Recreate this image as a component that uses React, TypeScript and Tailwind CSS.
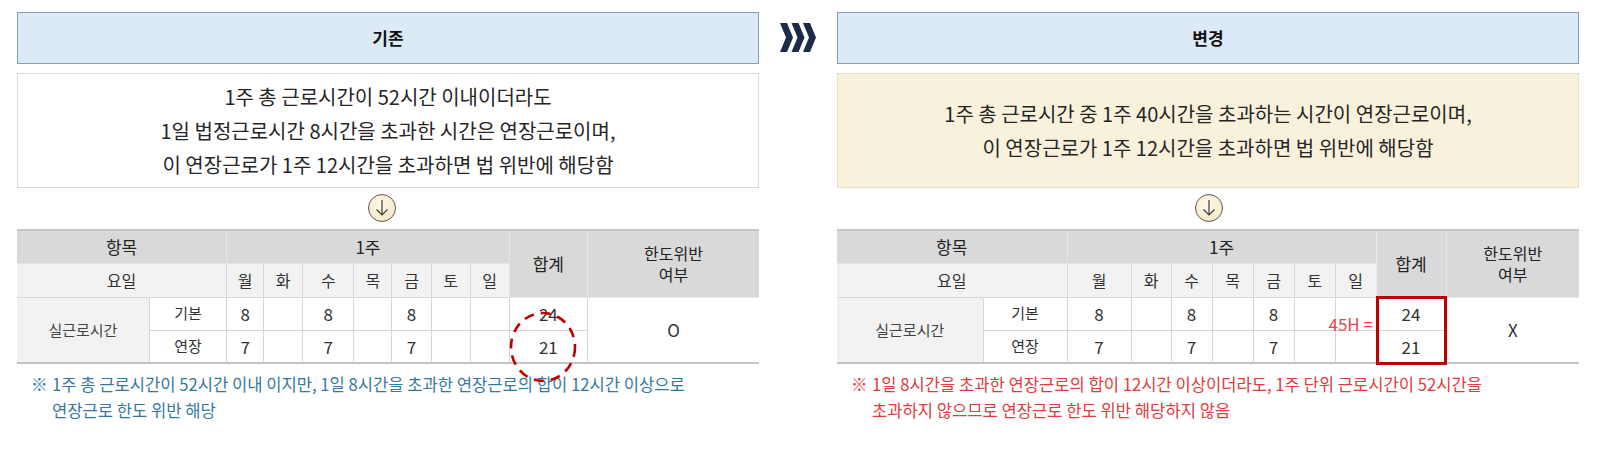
import { Fragment } from 'react'

type Side = {
  title: string
  lines: string[]
  boxClass: string
  cols: string[]
  verdict: string
  noteMark: string
  note: string[]
  noteClass: string
  arrowShift: string
}

const days = ['월', '화', '수', '목', '금', '토', '일']
const basic = ['8', '', '8', '', '8', '', '']
const extra = ['7', '', '7', '', '7', '', '']

const before: Side = {
  title: '기존',
  lines: [
    '1주 총 근로시간이 52시간 이내이더라도',
    '1일 법정근로시간 8시간을 초과한 시간은 연장근로이며,',
    '이 연장근로가 1주 12시간을 초과하면 법 위반에 해당함',
  ],
  boxClass: 'bg-white border-[#d9d9d9]',
  cols: ['w-[132px]', 'w-[77px]', 'w-[37px]', 'w-[39px]', 'w-[51px]', 'w-[38px]', 'w-[39px]', 'w-[39px]', 'w-[39px]', 'w-[78px]', 'w-[171px]'],
  verdict: 'O',
  noteMark: '※',
  note: ['1주 총 근로시간이 52시간 이내 이지만, 1일 8시간을 초과한 연장근로의 합이 12시간 이상으로', '연장근로 한도 위반 해당'],
  noteClass: 'text-[#35789f]',
  arrowShift: 'pr-[12px]',
}

const after: Side = {
  title: '변경',
  lines: ['1주 총 근로시간 중 1주 40시간을 초과하는 시간이 연장근로이며,', '이 연장근로가 1주 12시간을 초과하면 법 위반에 해당함'],
  boxClass: 'bg-[#f8f1dc] border-[#e3ddc9]',
  cols: ['w-[146px]', 'w-[84px]', 'w-[64px]', 'w-[40px]', 'w-[41px]', 'w-[41px]', 'w-[41px]', 'w-[41px]', 'w-[41px]', 'w-[70px]', 'w-[133px]'],
  verdict: 'X',
  noteMark: '※',
  note: ['1일 8시간을 초과한 연장근로의 합이 12시간 이상이더라도, 1주 단위 근로시간이 52시간을', '초과하지 않으므로 연장근로 한도 위반 해당하지 않음'],
  noteClass: 'text-[#e23b3b]',
  arrowShift: 'pl-[2px]',
}

const cell = 'border border-[#d6d6d6] text-center align-middle p-0'
const topCell = 'border border-[#e6e6e6] text-center align-middle p-0'

function Chevrons() {
  return (
    <svg width="36" height="29" viewBox="0 0 36 29">
      {[0, 11.5, 23].map((x) => (
        <polygon
          key={x}
          points={`${x},0 ${x + 7},0 ${x + 13},14.5 ${x + 7},29 ${x},29 ${x + 6},14.5`}
          fill="#1b2b48"
        />
      ))}
    </svg>
  )
}

function DownCircle() {
  return (
    <svg width="30" height="30" viewBox="0 0 30 30">
      <defs>
        <radialGradient id="cg" cx="45%" cy="40%" r="65%">
          <stop offset="0%" stopColor="#fffbea" />
          <stop offset="100%" stopColor="#f3e8c2" />
        </radialGradient>
      </defs>
      <circle cx="15" cy="15" r="13.5" fill="url(#cg)" stroke="#5a5a5a" strokeWidth="1" />
      <line x1="15" y1="7" x2="15" y2="22" stroke="#3a3a3a" strokeWidth="1.2" />
      <polyline points="9.5,16.5 15,22 20.5,16.5" fill="none" stroke="#3a3a3a" strokeWidth="1.2" />
    </svg>
  )
}

function HoursTable({ side }: { side: Side }) {
  return (
    <table className="w-full table-fixed border-collapse border-t-2 border-b-2 border-[#c4c4c4] text-[#333]">
      <colgroup>
        {side.cols.map((c, i) => (
          <col key={i} className={c} />
        ))}
      </colgroup>
      <tbody>
        <tr className="h-[33px] bg-[#d9d9d9] text-[17px] text-[#222]">
          <td colSpan={2} className={`${topCell} border-l-0`}>항목</td>
          <td colSpan={7} className={topCell}>1주</td>
          <td rowSpan={2} className={topCell}>합계</td>
          <td rowSpan={2} className={`${topCell} border-r-0 text-[16px] leading-[21px]`}>
            한도위반
            <br />
            여부
          </td>
        </tr>
        <tr className="h-[34px] bg-[#f2f2f2] text-[16px]">
          <td colSpan={2} className={`${cell} border-l-0`}>요일</td>
          {days.map((d) => (
            <td key={d} className={cell}>{d}</td>
          ))}
        </tr>
        <tr className="h-[33px] text-[17px]">
          <td rowSpan={2} className={`${cell} border-l-0 bg-[#f2f2f2] text-[15px] text-[#444]`}>실근로시간</td>
          <td className={`${cell} text-[15px]`}>기본</td>
          {basic.map((v, i) => (
            <td key={i} className={cell}>{v}</td>
          ))}
          <td className={cell}>24</td>
          <td rowSpan={2} className={`${cell} border-r-0`}>{side.verdict}</td>
        </tr>
        <tr className="h-[33px] text-[17px]">
          <td className={`${cell} text-[15px]`}>연장</td>
          {extra.map((v, i) => (
            <td key={i} className={cell}>{v}</td>
          ))}
          <td className={cell}>21</td>
        </tr>
      </tbody>
    </table>
  )
}

function Panel({ side, children }: { side: Side; children?: React.ReactNode }) {
  return (
    <div className="w-[742px] shrink-0">
      <div className="flex h-[52px] items-center justify-center border border-[#8b9eb4] bg-[#dce9f6] text-[17px] font-bold text-[#111]">
        {side.title}
      </div>
      <div className={`mt-[9px] flex h-[115px] flex-col items-center justify-center border text-[20px] leading-[34px] text-[#262626] ${side.boxClass}`}>
        {side.lines.map((l) => (
          <p key={l}>{l}</p>
        ))}
      </div>
      <div className={`mt-[5px] flex justify-center ${side.arrowShift}`}>
        <DownCircle />
      </div>
      <div className="relative mt-[6px]">
        <HoursTable side={side} />
        {children}
      </div>
      <div className={`mt-[7px] flex pl-[14px] text-[16.6px] leading-[26px] ${side.noteClass}`}>
        <span className="w-[21px] shrink-0">{side.noteMark}</span>
        <div>
          {side.note.map((n) => (
            <Fragment key={n}>
              <p>{n}</p>
            </Fragment>
          ))}
        </div>
      </div>
    </div>
  )
}

export default function App() {
  return (
    <div
      className="flex h-[450px] w-[1600px] overflow-hidden bg-white pl-[17px] pt-[12px]"
      style={{ fontFamily: '"Noto Sans CJK KR", "Noto Sans", sans-serif' }}
    >
      <Panel side={before}>
        <svg className="pointer-events-none absolute left-[490px] top-[82px]" width="72" height="72" viewBox="0 0 72 72">
          <ellipse cx="36" cy="36" rx="32" ry="34" fill="none" stroke="#c00000" strokeWidth="2.6" strokeDasharray="10 7" />
        </svg>
      </Panel>
      <div className="flex w-[78px] shrink-0 justify-center pt-[11px]">
        <Chevrons />
      </div>
      <Panel side={after}>
        <div className="pointer-events-none absolute left-[539px] top-[67px] h-[69px] w-[71px] border-[3px] border-[#c00000]" />
        <span className="absolute right-[206px] top-[85px] text-[17px] leading-[20px] text-[#e5484d]">45H =</span>
      </Panel>
    </div>
  )
}
